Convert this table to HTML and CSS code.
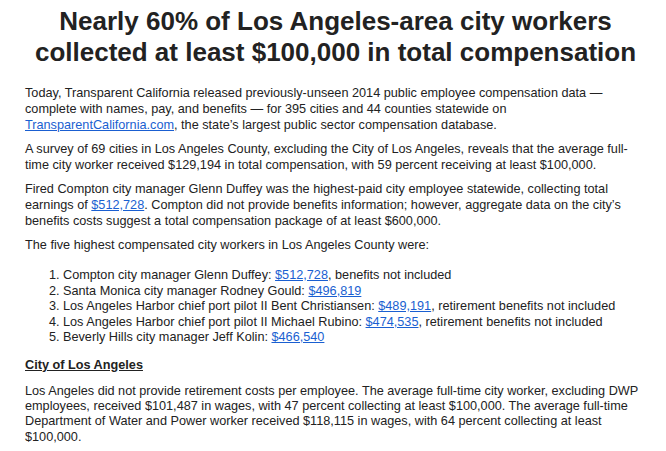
FILE: index.html
```html
<!DOCTYPE html>
<html lang="en">
<head>
<meta charset="utf-8">
<title>Transparent California</title>
<link rel="stylesheet" href="styles.css">
</head>
<body>
<article class="article">
  <h1 class="title">Nearly 60% of Los Angeles-area city workers collected at least $100,000 in total compensation</h1>
  <p class="para">Today, Transparent California released previously-unseen 2014 public employee compensation data — complete with names, pay, and benefits — for 395 cities and 44 counties statewide on <a class="link" href="#">TransparentCalifornia.com</a>, the state’s largest public sector compensation database.</p>
  <p class="para">A survey of 69 cities in Los Angeles County, excluding the City of Los Angeles, reveals that the average full-time city worker received $129,194 in total compensation, with 59 percent receiving at least $100,000.</p>
  <p class="para">Fired Compton city manager Glenn Duffey was the highest-paid city employee statewide, collecting total earnings of <a class="link" href="#">$512,728</a>. Compton did not provide benefits information; however, aggregate data on the city’s benefits costs suggest a total compensation package of at least $600,000.</p>
  <p class="para">The five highest compensated city workers in Los Angeles County were:</p>
  <ol class="list">
    <li>Compton city manager Glenn Duffey: <a class="link" href="#">$512,728</a>, benefits not included</li>
    <li>Santa Monica city manager Rodney Gould: <a class="link" href="#">$496,819</a></li>
    <li>Los Angeles Harbor chief port pilot II Bent Christiansen: <a class="link" href="#">$489,191</a>, retirement benefits not included</li>
    <li>Los Angeles Harbor chief port pilot II Michael Rubino: <a class="link" href="#">$474,535</a>, retirement benefits not included</li>
    <li>Beverly Hills city manager Jeff Kolin: <a class="link" href="#">$466,540</a></li>
  </ol>
  <h2 class="subhead">City of Los Angeles</h2>
  <p class="para para-tight">Los Angeles did not provide retirement costs per employee. The average full-time city worker, excluding DWP employees, received $101,487 in wages, with 47 percent collecting at least $100,000. The average full-time Department of Water and Power worker received $118,115 in wages, with 64 percent collecting at least $100,000.</p>
</article>
</body>
</html>
```
FILE: styles.css
```css
html, body {
  margin: 0;
  padding: 0;
  background: #ffffff;
}
body {
  font-family: "Liberation Sans", Arial, sans-serif;
  color: #222222;
  font-size: 12.7px;
  line-height: 16px;
}
.article {
  padding: 6px 20px 0 25px;
}
.title {
  margin: 0 0 17px 0;
  font-size: 26px;
  line-height: 31px;
  font-weight: bold;
  text-align: center;
  color: #222222;
}
.para {
  margin: 0 0 8px 0;
}
.para-tight {
  line-height: 15.4px;
}
.link {
  color: #1a5fd1;
  text-decoration: underline;
}
.list {
  margin: 15px 0 0 0;
  padding-left: 38px;
  line-height: 15.5px;
}
.subhead {
  margin: 11px 0 11px 0;
  font-size: 12.7px;
  line-height: 16px;
  font-weight: bold;
  text-decoration: underline;
}
```
